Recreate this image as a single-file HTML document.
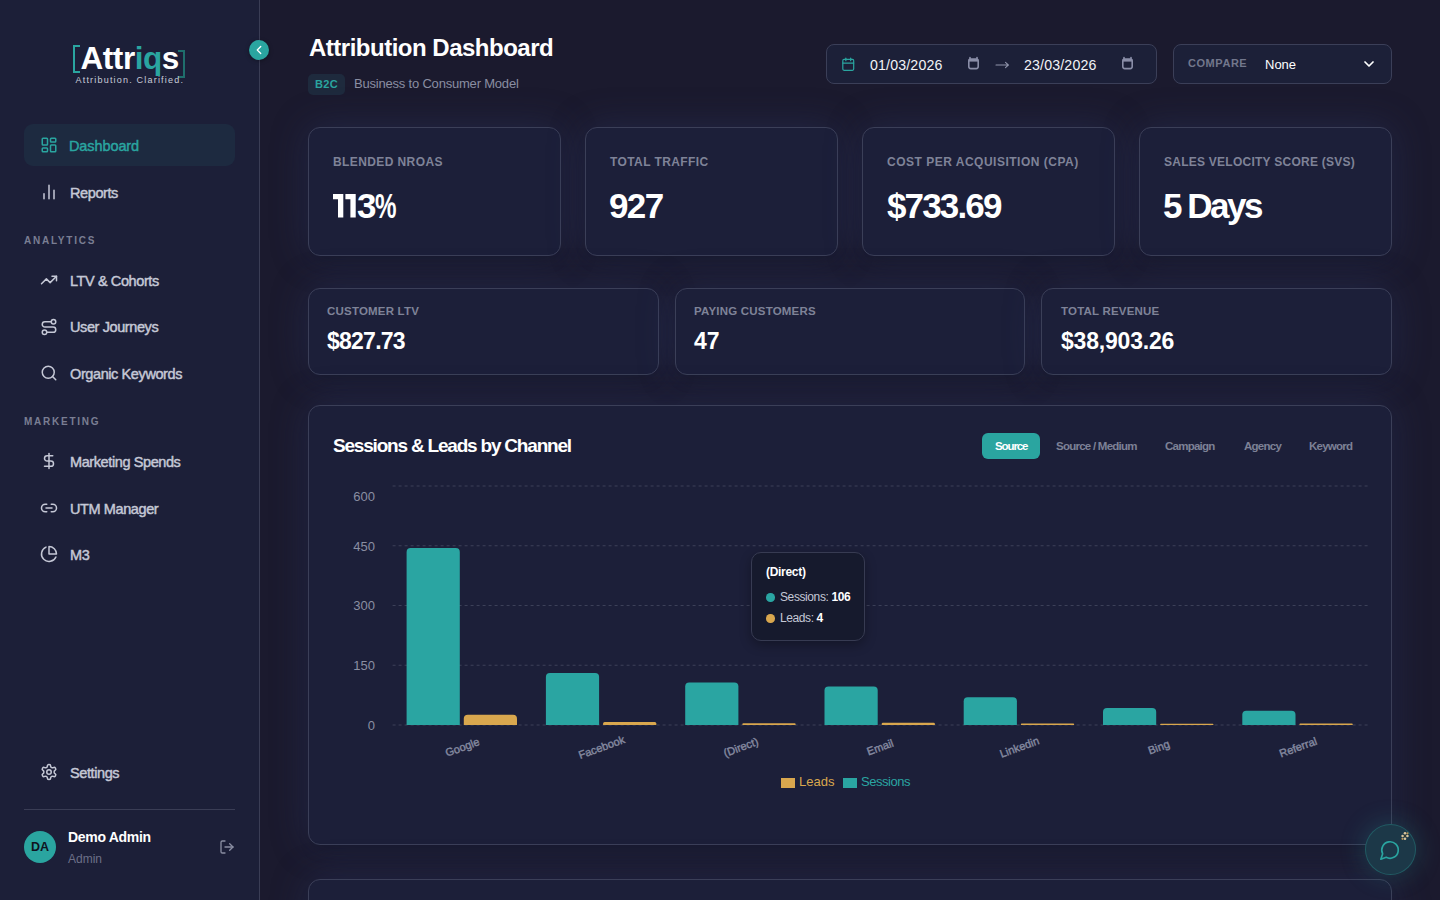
<!DOCTYPE html>
<html><head><meta charset="utf-8">
<style>
*{box-sizing:border-box;margin:0;padding:0}
html,body{width:1440px;height:900px;overflow:hidden}
body{background:#1b1a2e;font-family:"Liberation Sans",sans-serif;color:#fff;position:relative}
.a{position:absolute;white-space:nowrap}
#side{position:absolute;left:0;top:0;width:260px;height:900px;background:#1c1f38;border-right:1px solid #3a3d55}
.nav{position:absolute;left:70px;font-size:14.5px;line-height:17px;color:#c5c8d6;-webkit-text-stroke:0.45px #c5c8d6;letter-spacing:-0.4px;white-space:nowrap;margin-top:1.5px}
.sec{position:absolute;left:24px;font-size:10px;line-height:12px;font-weight:bold;letter-spacing:1.75px;color:#7a7e93}
.card{position:absolute;background:#1c1f39;border:1px solid #3b3f58;border-radius:12px;box-shadow:0 10px 16px -8px rgba(0,0,0,0.25),0 0 36px rgba(45,58,105,0.42)}
.lbl{position:absolute;font-size:12px;line-height:14px;font-weight:bold;letter-spacing:0.4px;color:#7f8398;white-space:nowrap}
.one{display:inline-block;width:12.2px;transform:scaleX(0.64);transform-origin:0 0}
.val{position:absolute;font-weight:bold;color:#fff;white-space:nowrap}
svg.ic{position:absolute;fill:none;stroke-linecap:round;stroke-linejoin:round}
.xl{font-family:"Liberation Sans",sans-serif;font-size:11px;fill:#858aa0;stroke:#858aa0;stroke-width:0.4px}
.yl{font-family:"Liberation Sans",sans-serif;font-size:13px;fill:#8a8ea2}
.tab{position:absolute;top:440px;font-size:11.5px;line-height:13px;font-weight:bold;color:#7d8196;letter-spacing:-0.75px;white-space:nowrap}
</style></head><body>
<div id="side">
  <div class="a" style="left:73px;top:45px;width:7px;height:28px;border:2px solid #2aa5a0;border-right:none"></div>
  <div class="a" style="left:80.5px;top:40.5px;font-size:31.5px;font-weight:bold;line-height:34px;letter-spacing:-0.45px">Attr<span style="color:#2aa5a0">iq</span>s</div>
  <div class="a" style="left:178px;top:50px;width:7px;height:28px;border:2px solid #1f6e6c;border-left:none"></div>
  <div class="a" style="left:75.5px;top:74.5px;font-size:9px;letter-spacing:1.2px;color:#c9ccd8;line-height:11px">Attribution. Clarified.</div>

  <div class="a" style="left:24px;top:124px;width:211px;height:42px;border-radius:9px;background:#1d2a40"></div>
  <div class="nav" style="top:136px;left:69px;letter-spacing:-0.1px;color:#2aa5a0;-webkit-text-stroke-color:#2aa5a0">Dashboard</div>
  <div class="nav" style="top:183px">Reports</div>
  <div class="sec" style="top:235px">ANALYTICS</div>
  <div class="nav" style="top:271px">LTV &amp; Cohorts</div>
  <div class="nav" style="top:317px">User Journeys</div>
  <div class="nav" style="top:364px">Organic Keywords</div>
  <div class="sec" style="top:416px">MARKETING</div>
  <div class="nav" style="top:452px">Marketing Spends</div>
  <div class="nav" style="top:499px">UTM Manager</div>
  <div class="nav" style="top:545px">M3</div>
  <div class="nav" style="top:763px">Settings</div>

  <svg class="ic" style="left:40px;top:136px" width="18" height="18" viewBox="0 0 24 24" stroke="#2aa5a0" stroke-width="2"><rect width="7" height="9" x="3" y="3" rx="1"/><rect width="7" height="5" x="14" y="3" rx="1"/><rect width="7" height="9" x="14" y="12" rx="1"/><rect width="7" height="5" x="3" y="16" rx="1"/></svg>
  <svg class="ic" style="left:39.3px;top:181.9px" width="20" height="20" viewBox="0 0 24 24" stroke="#c5c8d6" stroke-width="1.8"><path d="M18 20V10M12 20V4M6 20v-6"/></svg>
  <svg class="ic" style="left:40px;top:271px" width="18" height="18" viewBox="0 0 24 24" stroke="#c5c8d6" stroke-width="2"><polyline points="22 7 13.5 15.5 8.5 10.5 2 17"/><polyline points="16 7 22 7 22 13"/></svg>
  <svg class="ic" style="left:40px;top:318.2px" width="18" height="18" viewBox="0 0 24 24" stroke="#c5c8d6" stroke-width="2"><circle cx="6" cy="19" r="3"/><path d="M9 19h8.5a3.5 3.5 0 0 0 0-7h-11a3.5 3.5 0 0 1 0-7H15"/><circle cx="18" cy="5" r="3"/></svg>
  <svg class="ic" style="left:40px;top:364px" width="18" height="18" viewBox="0 0 24 24" stroke="#c5c8d6" stroke-width="2"><circle cx="11" cy="11" r="8"/><path d="m21 21-4.3-4.3"/></svg>
  <svg class="ic" style="left:40px;top:452px" width="18" height="18" viewBox="0 0 24 24" stroke="#c5c8d6" stroke-width="2"><line x1="12" x2="12" y1="2" y2="22"/><path d="M17 5H9.5a3.5 3.5 0 0 0 0 7h5a3.5 3.5 0 0 1 0 7H6"/></svg>
  <svg class="ic" style="left:40px;top:499px" width="18" height="18" viewBox="0 0 24 24" stroke="#c5c8d6" stroke-width="2"><path d="M9 17H7A5 5 0 0 1 7 7h2"/><path d="M15 7h2a5 5 0 1 1 0 10h-2"/><line x1="8" x2="16" y1="12" y2="12"/></svg>
  <svg class="ic" style="left:40px;top:545px" width="18" height="18" viewBox="0 0 24 24" stroke="#c5c8d6" stroke-width="2"><path d="M21.21 15.89A10 10 0 1 1 8 2.83"/><path d="M22 12A10 10 0 0 0 12 2v10z"/></svg>
  <svg class="ic" style="left:40px;top:763px" width="18" height="18" viewBox="0 0 24 24" stroke="#c5c8d6" stroke-width="2"><path d="M12.22 2h-.44a2 2 0 0 0-2 2v.18a2 2 0 0 1-1 1.73l-.43.25a2 2 0 0 1-2 0l-.15-.08a2 2 0 0 0-2.730.73l-.22.38a2 2 0 0 0 .73 2.73l.15.1a2 2 0 0 1 1 1.72v.51a2 2 0 0 1-1 1.74l-.15.09a2 2 0 0 0-.73 2.73l.22.38a2 2 0 0 0 2.73.73l.15-.08a2 2 0 0 1 2 0l.43.25a2 2 0 0 1 1 1.73V20a2 2 0 0 0 2 2h.44a2 2 0 0 0 2-2v-.18a2 2 0 0 1 1-1.73l.43-.25a2 2 0 0 1 2 0l.15.08a2 2 0 0 0 2.73-.73l.22-.39a2 2 0 0 0-.73-2.73l-.15-.08a2 2 0 0 1-1-1.74v-.5a2 2 0 0 1 1-1.74l.15-.09a2 2 0 0 0 .73-2.73l-.22-.38a2 2 0 0 0-2.73-.73l-.15.08a2 2 0 0 1-2 0l-.43-.25a2 2 0 0 1-1-1.73V4a2 2 0 0 0-2-2z"/><circle cx="12" cy="12" r="3"/></svg>

  <div class="a" style="left:24px;top:809px;width:211px;height:1px;background:#3a3d55"></div>
  <div class="a" style="left:24px;top:831px;width:32px;height:32px;border-radius:50%;background:#2aa5a0;color:#10131f;font-size:12.5px;font-weight:bold;text-align:center;line-height:32px">DA</div>
  <div class="a" style="left:68px;top:829px;font-size:14px;line-height:16px;font-weight:bold;letter-spacing:-0.3px">Demo Admin</div>
  <div class="a" style="left:68px;top:852px;font-size:12px;line-height:14px;color:#6c7088">Admin</div>
  <svg class="ic" style="left:218.7px;top:839.2px" width="16" height="16" viewBox="0 0 24 24" stroke="#8a8ea2" stroke-width="2"><path d="M9 21H5a2 2 0 0 1-2-2V5a2 2 0 0 1 2-2h4"/><polyline points="16 17 21 12 16 7"/><line x1="21" x2="9" y1="12" y2="12"/></svg>
</div>
<div class="a" style="left:249px;top:40px;width:20px;height:20px;border-radius:50%;background:#2aa5a0;box-shadow:0 1px 4px rgba(0,0,0,0.35)"></div>
<svg class="ic" style="left:252px;top:43px" width="14" height="14" viewBox="0 0 24 24" stroke="#fff" stroke-width="2.2"><path d="m15 18-6-6 6-6"/></svg>
<!-- header -->
<div class="a" style="left:309px;top:34px;font-size:24px;line-height:28px;font-weight:bold;letter-spacing:-0.5px">Attribution Dashboard</div>
<div class="a" style="left:308px;top:74px;width:37px;height:21px;border-radius:5px;background:#1e2a3d;color:#2aa5a0;font-size:11px;font-weight:bold;text-align:center;line-height:21px;letter-spacing:0.3px">B2C</div>
<div class="a" style="left:354px;top:76px;font-size:13px;line-height:15px;color:#8a8ea2;letter-spacing:-0.2px">Business to Consumer Model</div>

<div class="a" style="left:826px;top:44px;width:331px;height:40px;border:1px solid #3b3f58;border-radius:8px;background:#1c2038"></div>
<svg class="ic" style="left:840.5px;top:56.5px" width="14.5" height="14.5" viewBox="0 0 24 24" stroke="#2aa5a0" stroke-width="2"><rect width="18" height="18" x="3" y="4" rx="2"/><line x1="16" x2="16" y1="2" y2="6"/><line x1="8" x2="8" y1="2" y2="6"/><line x1="3" x2="21" y1="10" y2="10"/></svg>
<div class="a" style="left:870px;top:56.5px;font-size:14.2px;line-height:16px;color:#f2f3f7;letter-spacing:0.15px">01/03/2026</div>
<svg class="a" style="left:967px;top:56px" width="13" height="14" viewBox="0 0 13 14"><path d="M3 1.5v2M10 1.5v2" stroke="#8a8ea8" stroke-width="1.6" stroke-linecap="round"/><rect x="1.8" y="3" width="9.4" height="9.6" rx="2" fill="none" stroke="#8a8ea8" stroke-width="1.6"/><rect x="1.8" y="3" width="9.4" height="2.6" fill="#8a8ea8"/></svg>
<svg class="ic" style="left:995px;top:60.5px" width="15" height="8" viewBox="0 0 15 8" stroke="#8f93aa" stroke-width="1.1"><path d="M1 4h12.5M10.5 1.4l2.8 2.6-2.8 2.6"/></svg>
<div class="a" style="left:1024px;top:56.5px;font-size:14.2px;line-height:16px;color:#f2f3f7;letter-spacing:0.15px">23/03/2026</div>
<svg class="a" style="left:1121px;top:56px" width="13" height="14" viewBox="0 0 13 14"><path d="M3 1.5v2M10 1.5v2" stroke="#8a8ea8" stroke-width="1.6" stroke-linecap="round"/><rect x="1.8" y="3" width="9.4" height="9.6" rx="2" fill="none" stroke="#8a8ea8" stroke-width="1.6"/><rect x="1.8" y="3" width="9.4" height="2.6" fill="#8a8ea8"/></svg>

<div class="a" style="left:1173px;top:44px;width:219px;height:40px;border:1px solid #3b3f58;border-radius:8px;background:#1c2038"></div>
<div class="a" style="left:1188px;top:57px;font-size:11px;line-height:13px;font-weight:bold;letter-spacing:0.55px;color:#72778c">COMPARE</div>
<div class="a" style="left:1265px;top:57px;font-size:13px;line-height:16px;color:#fff">None</div>
<svg class="ic" style="left:1360.5px;top:55.5px" width="16" height="16" viewBox="0 0 24 24" stroke="#fff" stroke-width="2.6"><path d="m6 9 6 6 6-6"/></svg>

<!-- KPI row1 -->
<div class="card" style="left:308px;top:127px;width:253px;height:129px"></div>
<div class="card" style="left:585px;top:127px;width:253px;height:129px"></div>
<div class="card" style="left:862px;top:127px;width:253px;height:129px"></div>
<div class="card" style="left:1139px;top:127px;width:253px;height:129px"></div>
<div class="lbl" style="left:333px;top:155px">BLENDED NROAS</div>
<div class="lbl" style="left:610px;top:155px">TOTAL TRAFFIC</div>
<div class="lbl" style="left:887px;top:155px;letter-spacing:0.5px">COST PER ACQUISITION (CPA)</div>
<div class="lbl" style="left:1164px;top:155px;letter-spacing:0.25px">SALES VELOCITY SCORE (SVS)</div>
<svg class="a" style="left:0;top:0" width="400" height="230"><path d="M333 194H343.3V217.5H338V199.2H333Z M345.4 194H355.7V217.5H350.4V199.2H345.4Z" fill="#fff"/></svg>
<div class="val" style="left:357px;top:186.5px;font-size:35px;line-height:38px"><span style="letter-spacing:-1.1px">3</span><span style="display:inline-block;transform:scaleX(0.69);transform-origin:0 0">%</span></div>
<div class="val" style="left:609px;top:186.5px;font-size:35px;line-height:38px;letter-spacing:-1.6px">927</div>
<div class="val" style="left:887px;top:186.5px;font-size:35px;line-height:38px;letter-spacing:-1.85px">$733.69</div>
<div class="val" style="left:1163px;top:186.5px;font-size:35px;line-height:38px;letter-spacing:-2.5px">5 Days</div>
<!-- KPI row2 -->
<div class="card" style="left:308px;top:288px;width:351px;height:87px"></div>
<div class="card" style="left:675px;top:288px;width:350px;height:87px"></div>
<div class="card" style="left:1041px;top:288px;width:351px;height:87px"></div>
<div class="lbl" style="left:327px;top:304px;font-size:11.5px;letter-spacing:0.2px">CUSTOMER LTV</div>
<div class="lbl" style="left:694px;top:304px;font-size:11.5px;letter-spacing:0.2px">PAYING CUSTOMERS</div>
<div class="lbl" style="left:1061px;top:304px;font-size:11.5px;letter-spacing:0.2px">TOTAL REVENUE</div>
<div class="val" style="left:327px;top:327.5px;font-size:23px;line-height:26px;letter-spacing:-0.75px">$827.73</div>
<div class="val" style="left:694px;top:327.5px;font-size:23px;line-height:26px">47</div>
<div class="val" style="left:1061px;top:327.5px;font-size:23px;line-height:26px;letter-spacing:-0.2px">$38,903.26</div>

<!-- chart card -->
<div class="card" style="left:308px;top:405px;width:1084px;height:440px"></div>
<div class="a" style="left:333px;top:435px;font-size:19px;line-height:22px;font-weight:bold;letter-spacing:-1.2px">Sessions &amp; Leads by Channel</div>
<div class="a" style="left:982px;top:433px;width:58px;height:26px;border-radius:6px;background:#2aa5a0"></div>
<div class="tab" style="left:995px;color:#fff;letter-spacing:-1.1px">Source</div>
<div class="tab" style="left:1056px">Source / Medium</div>
<div class="tab" style="left:1165px">Campaign</div>
<div class="tab" style="left:1244px">Agency</div>
<div class="tab" style="left:1309px">Keyword</div>
<svg class="a" style="left:0;top:0" width="1440" height="900" viewBox="0 0 1440 900">
<line x1="392.6" x2="1367.6" y1="486" y2="486" stroke="#3c4058" stroke-dasharray="3 3"/>
<line x1="392.6" x2="1367.6" y1="545.75" y2="545.75" stroke="#3c4058" stroke-dasharray="3 3"/>
<line x1="392.6" x2="1367.6" y1="605.5" y2="605.5" stroke="#3c4058" stroke-dasharray="3 3"/>
<line x1="392.6" x2="1367.6" y1="665.25" y2="665.25" stroke="#3c4058" stroke-dasharray="3 3"/>
<line x1="392.6" x2="1367.6" y1="725" y2="725" stroke="#3c4058" stroke-dasharray="3 3"/>
<path d="M406.6,725 V552.1 Q406.6,548.1 410.6,548.1 H455.8 Q459.8,548.1 459.8,552.1 V725 Z" fill="#2aa5a2"/>
<path d="M463.8,725 V718.8 Q463.8,714.8 467.8,714.8 H513.0 Q517.0,714.8 517.0,718.8 V725 Z" fill="#d9a74e"/>
<text x="462.2" y="751" transform="rotate(-20 462.2 747)" text-anchor="middle" class="xl">Google</text>
<path d="M545.9,725 V676.9 Q545.9,672.9 549.9,672.9 H595.1 Q599.1,672.9 599.1,676.9 V725 Z" fill="#2aa5a2"/>
<path d="M603.1,725 V723.5 Q603.1,722.0 604.6,722.0 H654.8 Q656.3,722.0 656.3,723.5 V725 Z" fill="#d9a74e"/>
<text x="601.5" y="751" transform="rotate(-20 601.5 747)" text-anchor="middle" class="xl">Facebook</text>
<path d="M685.2,725 V686.6 Q685.2,682.6 689.2,682.6 H734.4 Q738.4,682.6 738.4,686.6 V725 Z" fill="#2aa5a2"/>
<path d="M742.4,725 V724.1 Q742.4,723.2 743.3,723.2 H794.7 Q795.6,723.2 795.6,724.1 V725 Z" fill="#d9a74e"/>
<text x="740.8" y="751" transform="rotate(-20 740.8 747)" text-anchor="middle" class="xl">(Direct)</text>
<path d="M824.5,725 V690.5 Q824.5,686.5 828.5,686.5 H873.7 Q877.7,686.5 877.7,690.5 V725 Z" fill="#2aa5a2"/>
<path d="M881.7,725 V723.9 Q881.7,722.8 882.8,722.8 H933.8 Q934.9,722.8 934.9,723.9 V725 Z" fill="#d9a74e"/>
<text x="880.1" y="751" transform="rotate(-20 880.1 747)" text-anchor="middle" class="xl">Email</text>
<path d="M963.7,725 V701.2 Q963.7,697.2 967.7,697.2 H1012.9 Q1016.9,697.2 1016.9,701.2 V725 Z" fill="#2aa5a2"/>
<path d="M1020.9,725 V724.3 Q1020.9,723.6 1021.6,723.6 H1073.4 Q1074.1,723.6 1074.1,724.3 V725 Z" fill="#d9a74e"/>
<text x="1019.4" y="751" transform="rotate(-20 1019.4 747)" text-anchor="middle" class="xl">Linkedin</text>
<path d="M1103.0,725 V712.0 Q1103.0,708.0 1107.0,708.0 H1152.2 Q1156.2,708.0 1156.2,712.0 V725 Z" fill="#2aa5a2"/>
<path d="M1160.2,725 V724.4 Q1160.2,723.8 1160.8,723.8 H1212.8 Q1213.4,723.8 1213.4,724.4 V725 Z" fill="#d9a74e"/>
<text x="1158.7" y="751" transform="rotate(-20 1158.7 747)" text-anchor="middle" class="xl">Bing</text>
<path d="M1242.3,725 V714.8 Q1242.3,710.8 1246.3,710.8 H1291.5 Q1295.5,710.8 1295.5,714.8 V725 Z" fill="#2aa5a2"/>
<path d="M1299.5,725 V724.3 Q1299.5,723.6 1300.2,723.6 H1352.0 Q1352.7,723.6 1352.7,724.3 V725 Z" fill="#d9a74e"/>
<text x="1298.0" y="751" transform="rotate(-20 1298.0 747)" text-anchor="middle" class="xl">Referral</text>
<text x="375" y="500.5" text-anchor="end" class="yl">600</text>
<text x="375" y="550.5" text-anchor="end" class="yl">450</text>
<text x="375" y="610.0" text-anchor="end" class="yl">300</text>
<text x="375" y="669.8" text-anchor="end" class="yl">150</text>
<text x="375" y="729.5" text-anchor="end" class="yl">0</text>
</svg>
<svg class="a" style="left:781px;top:777.7px" width="14" height="10.5"><rect width="14" height="10.5" fill="#d9a74e"/></svg>
<div class="a" style="left:799px;top:774px;font-size:13px;line-height:16px;color:#d9a74e">Leads</div>
<svg class="a" style="left:843px;top:777.7px" width="14" height="10.5"><rect width="14" height="10.5" fill="#2aa5a2"/></svg>
<div class="a" style="left:861px;top:774px;font-size:13px;line-height:16px;color:#2aa5a2;letter-spacing:-0.45px">Sessions</div>

<!-- tooltip -->
<div class="a" style="left:751px;top:552px;width:114px;height:89px;border-radius:10px;background:#161a2d;border:1px solid #373b52;box-shadow:0 4px 12px rgba(0,0,0,0.3)"></div>
<div class="a" style="left:766px;top:565px;font-size:12px;line-height:14px;font-weight:bold;letter-spacing:-0.3px">(Direct)</div>
<div class="a" style="left:766px;top:593.3px;width:8.5px;height:8.5px;border-radius:50%;background:#2aa5a2"></div>
<div class="a" style="left:780px;top:590px;font-size:12px;line-height:14px;color:#c5c8d6;letter-spacing:-0.4px">Sessions: <b style="color:#fff">106</b></div>
<div class="a" style="left:766px;top:614px;width:8.5px;height:8.5px;border-radius:50%;background:#d9a74e"></div>
<div class="a" style="left:780px;top:611px;font-size:12px;line-height:14px;color:#c5c8d6;letter-spacing:-0.4px">Leads: <b style="color:#fff">4</b></div>

<!-- bottom card -->
<div class="card" style="left:308px;top:879px;width:1084px;height:200px"></div>

<!-- chat button -->
<div class="a" style="left:1364.5px;top:824px;width:51px;height:51px;border-radius:50%;background:#1c3848;border:1px solid rgba(42,165,160,0.32);box-shadow:0 0 26px rgba(42,165,160,0.28)"></div>
<svg class="ic" style="left:1378.5px;top:839px" width="22" height="22" viewBox="0 0 24 24" stroke="#2aa5a0" stroke-width="1.8"><path d="M7.9 20A9 9 0 1 0 4 16.1L2 22Z"/></svg>
<svg class="a" style="left:1399.5px;top:831px" width="10" height="10" viewBox="0 0 10 10"><g fill="#d8c49a"><circle cx="5" cy="2.3" r="1.3"/><circle cx="5" cy="7.7" r="1.3"/><circle cx="2.6" cy="5" r="1.3"/><circle cx="7.4" cy="5" r="1.3"/><circle cx="7.5" cy="2.3" r="1.1" fill="#b8945a"/><circle cx="2.5" cy="7.8" r="1.1" fill="#b8945a"/></g><circle cx="5" cy="5" r="1.1" fill="#3a3a2a"/></svg>
</body></html>
